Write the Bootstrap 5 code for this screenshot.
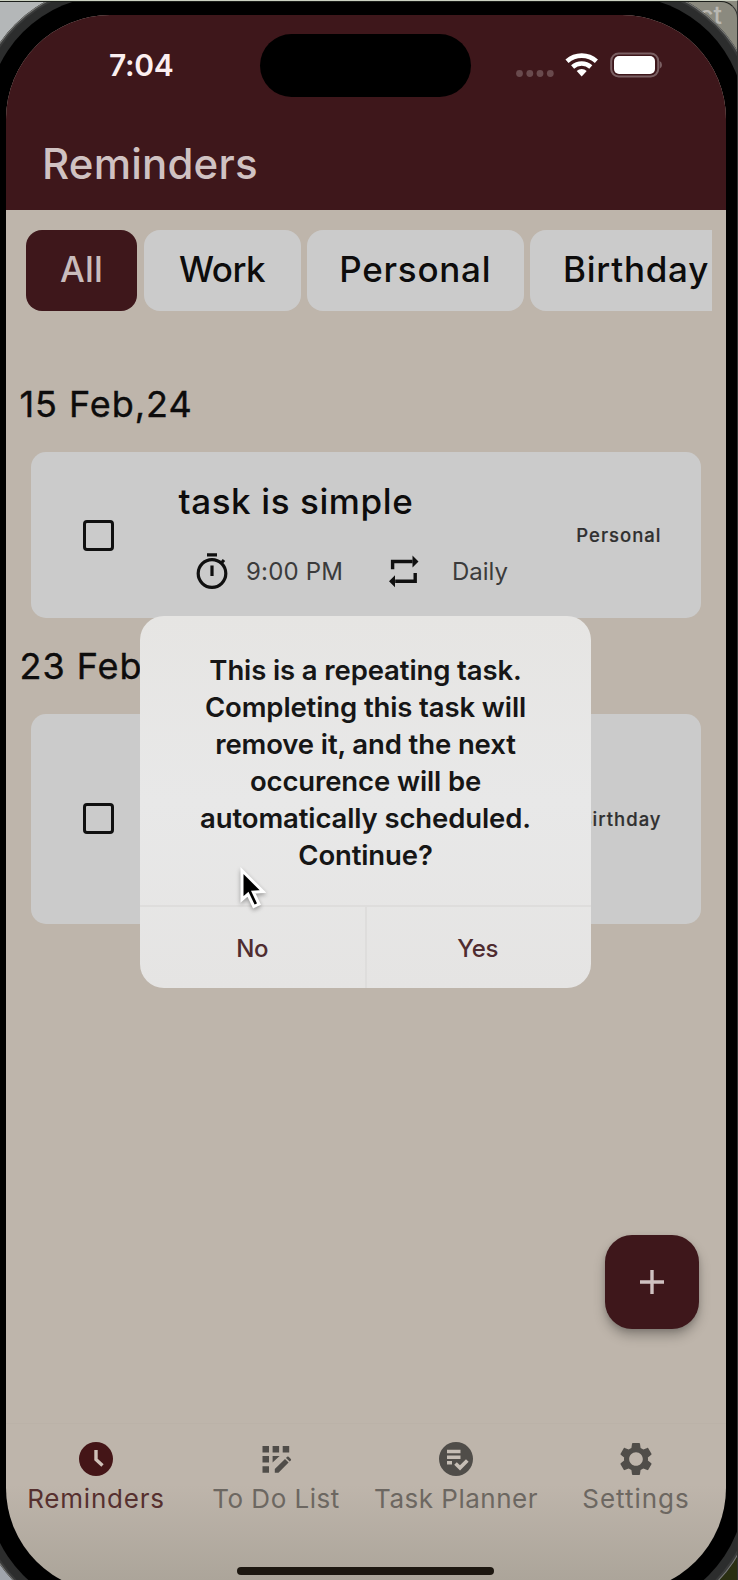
<!DOCTYPE html>
<html lang="en">
<head>
<meta charset="utf-8">
<meta name="viewport" content="width=device-width, initial-scale=1">
<title>Reminders</title>
<link href="https://cdn.jsdelivr.net/npm/bootstrap@5.3.0/dist/css/bootstrap.min.css" rel="stylesheet">
<style>
  :root { --maroon: #3e171b; --sand: #beb5ab; --tile: #cbcbcb; }
  html, body { height: 1580px; overflow: hidden; }
  body {
    font-family: Inter, "Liberation Sans", sans-serif; color: #0d0c0c;
    background:
      linear-gradient(90deg, #b4b7b8 0 50%, transparent 50%) top / 100% 200px no-repeat,
      linear-gradient(90deg, transparent 0 50%, #8b8a7f 50%) top / 100% 200px no-repeat,
      linear-gradient(90deg, #a0a5ac 0 50%, #2a2f12 50%);
  }
  svg { display: block; flex: none; }
  .desk-text { left: 699px; top: 0; font-size: 25px; line-height: 30px; font-weight: 500; color: #b9b8b2; }
  .window-edge { inset: 0; border-top: 1px solid #ccd2c2; border-right: 1px solid #3c3c3c; z-index: 30; pointer-events: none; }
  .window-edge::before { content: ""; position: absolute; inset: 0 -1px 0 0; border-top: 1px solid #1c1f1b; border-right: 1px solid #333; border-radius: 0 17px 0 0; }

  /* device: metal rim, black bezel, screen */
  .rim { width: 780px; height: 1637px; margin: -15px 0 0 -24px; padding: 11px; border-radius: 134px; background: #2c2d2d; box-shadow: inset 0 0 0 1px #777875, inset 0 0 0 3px #3a3b3b; }
  .bezel { height: 100%; padding: 19px; border-radius: 123px; background: #000; }
  .screen { height: 1577px; border-radius: 104px; background: linear-gradient(var(--sand) 0 1470px, #aca59a 1565px); }

  .app-top { height: 194.5px; background: var(--maroon); }
  .status { height: 100px; padding: 0 64px 0 103px; }
  .clock { font-size: 30px; font-weight: 600; color: #fbeff0; width: 151px; letter-spacing: -.3px; }
  .island { width: 211px; height: 63px; border-radius: 32px; background: #000; }
  .app-title { font-size: 42px; font-weight: 500; line-height: 50px; letter-spacing: .2px; color: #d0c2c2; margin: 23.500px 0 0 36px; }

  .chips { margin: 20.5px 14px 0 20px; gap: 6.5px; }
  .chip { height: 81px; border-radius: 16px; background: var(--tile); font-size: 35px; font-weight: 500; flex: none; border: 0; letter-spacing: .75px; color: #0d0c0c; padding: 0 0 2px; }
  .chip-on { background: var(--maroon); color: #c9bcbc; }

  .day { font-size: 36px; line-height: 42px; font-weight: 400; letter-spacing: .95px; padding: 0 0 2px 13.500px; margin: 0; -webkit-text-stroke: .4px; }
  .task { margin: 25px 25px 0; border-radius: 15px; background: var(--tile); }
  .task-check { width: 31px; height: 31px; border: 3.2px solid #101010; border-radius: 4px; margin-left: 51.500px; }
  .task-name { font-size: 35px; line-height: 42px; font-weight: 500; letter-spacing: .6px; }
  .task-meta { font-size: 24px; line-height: 34px; color: #3b3b3b; }
  .task-tag { font-size: 18.500px; font-weight: 500; letter-spacing: 1px; color: #303030; margin: 1.500px 39.500px 0 0; -webkit-text-stroke: .2px; }

  .alert-box { left: 134px; top: 601px; width: 451px; height: 372px; border-radius: 24px; background: linear-gradient(#e6e5e3, #e8e8e8 50%, #e5e4e3); z-index: 5; }
  .alert-text { font-size: 27.5px; line-height: 37px; font-weight: 600; letter-spacing: -.12px; padding-top: 36px; height: 289px; margin: 0; color: #161616; }
  .alert-actions { border-top: 2px solid #dedddc; }
  .alert-btn { font-size: 24px; font-weight: 500; color: #4f2c30; background: none; border: 0; letter-spacing: -.2px; padding: 2px 1px 0 0; }
  .alert-btn + .alert-btn { border-left: 2px solid #dedddc; margin-left: -1px; }
  .pointer { left: 98px; top: 250px; filter: drop-shadow(0 2px 2px rgba(0,0,0,.35)); }

  .fab { right: 27px; top: 1219.500px; width: 94px; height: 94.500px; border-radius: 27px; background: var(--maroon); box-shadow: 0 7px 12px rgba(0,0,0,.26), 0 2px 5px rgba(0,0,0,.12); border: 0; padding: 0; }
  .tabs { height: 169px; padding-top: 17px; border-top: 1px solid #bbb2a8; }
  .tab { width: 25%; font-size: 26px; line-height: 34px; color: #6c6761; gap: 4.500px; white-space: nowrap; }
  .tab svg { color: #504d49; }
  .tab-on { color: #56302f; }
  .tab-on svg { color: #441517; }
  .home-bar { left: 231px; top: 1552px; width: 257px; height: 8px; border-radius: 4px; background: #1d1710; }
</style>
</head>
<body>
<span class="desk-text position-absolute">ct</span>
<div class="window-edge position-absolute"></div>
<div class="rim position-relative">
 <div class="bezel">
  <div class="screen position-relative overflow-hidden d-flex flex-column">

   <header class="app-top">
    <div class="status d-flex align-items-center">
     <span class="clock">7:04</span>
     <span class="island"></span>
     <svg class="ms-auto" width="146" height="28" viewBox="0 0 146 28">
      <g fill="#694a4d"><circle cx="3.500" cy="22.500" r="3.400"/><circle cx="13.800" cy="22.500" r="3.400"/><circle cx="24" cy="22.500" r="3.400"/><circle cx="34.300" cy="22.500" r="3.400"/></g>
      <g fill="none" stroke="#fff" stroke-width="4.600"><path d="M51 10.300a22 22 0 0 1 29.400 0"/><path d="M56.600 16a13.800 13.800 0 0 1 18.200 0"/></g>
      <path fill="#fff" d="M65.700 25.500l-5-5.600a7.600 7.600 0 0 1 10 0z"/>
      <rect x="95.200" y="2.400" width="47" height="23" rx="7.500" fill="none" stroke="#7a5f62" stroke-width="2"/>
      <rect x="98" y="5" width="41" height="18" rx="5" fill="#fff"/>
      <path d="M143.600 10q2.400 1 2.400 3.900t-2.400 3.900z" fill="#7a5f62"/>
     </svg>
    </div>
    <h1 class="app-title">Reminders</h1>
   </header>

   <nav class="chips d-flex overflow-hidden">
    <button class="chip chip-on" style="width:111px;letter-spacing:.1px">All</button>
    <button class="chip" style="width:157px;letter-spacing:-.5px">Work</button>
    <button class="chip" style="width:216.500px">Personal</button>
    <button class="chip ps-4 text-start" style="width:210px"><span style="padding-left:9px">Birthday</span></button>
   </nav>

   <h2 class="day" style="margin-top:72px">15 Feb,24</h2>
   <article class="task d-flex align-items-center" style="height:166px">
    <span class="task-check"></span>
    <div class="flex-grow-1" style="margin-left:65px">
     <div class="task-name" style="padding-top:1px">task is simple</div>
     <div class="task-meta d-flex align-items-center" style="margin:29px 0 0 15.500px">
      <svg width="36" height="40" viewBox="0 0 36 40" fill="none" stroke="#101010" stroke-width="3.200"><circle cx="18" cy="22.500" r="13.800"/><path d="M13 3.800h10M18 14.500v10.500M26.500 13l3.500-4"/></svg>
      <span style="margin:2px 0 0 16px;width:96px;letter-spacing:.2px;white-space:nowrap">9:00 PM</span>
      <svg style="margin-left:46px" width="32" height="34" viewBox="0 0 32 34"><g fill="none" stroke="#101010" stroke-width="3.400"><path d="M4.600 15.200V7.500h20"/><path d="M27.200 19v8.300h-20"/></g><path fill="#101010" d="M24.500 1.500l6 6-6 6zM7 21.300L1 27.300l6 6z"/></svg>
      <span style="margin:2px 0 0 32px">Daily</span>
     </div>
    </div>
    <span class="task-tag">Personal</span>
   </article>

   <h2 class="day" style="margin-top:27px">23 Feb</h2>
   <article class="task d-flex align-items-center" style="height:209.500px">
    <span class="task-check"></span>
    <span class="task-tag ms-auto">Birthday</span>
   </article>

   <section class="alert-box position-absolute d-flex flex-column text-center overflow-hidden">
    <p class="alert-text">This is a repeating task.<br>Completing this task will<br>remove it, and the next<br>occurence will be<br>automatically scheduled.<br>Continue?</p>
    <div class="alert-actions d-flex flex-grow-1">
     <button class="alert-btn w-50">No</button>
     <button class="alert-btn w-50">Yes</button>
    </div>
    <svg class="pointer position-absolute" width="32" height="46" viewBox="0 0 32 46"><path d="M4 4.500v29l6-5.200 5.800 12.200 5.200-2.500-5.700-11.800 9.700-.7z" fill="#000" stroke="#fff" stroke-width="3"/></svg>
   </section>

   <button class="fab position-absolute d-flex align-items-center justify-content-center">
    <svg width="24" height="24" viewBox="0 0 24 24" stroke="#cfc1c1" stroke-width="3.400"><path d="M12 0v24M0 12h24"/></svg>
   </button>

   <nav class="tabs d-flex mt-auto">
    <div class="tab tab-on d-flex flex-column align-items-center" style="letter-spacing:.8px">
     <svg width="36" height="36" viewBox="0 0 36 36"><circle cx="18" cy="18" r="17" fill="currentColor"/><path d="M18 9v9.500l6.500 6" fill="none" stroke="#cfc0b8" stroke-width="3.400"/></svg>
     Reminders
    </div>
    <div class="tab d-flex flex-column align-items-center" style="letter-spacing:.5px">
     <svg width="36" height="36" viewBox="0 0 36 36" fill="currentColor"><path d="M4.500 5h6.500v6.500H4.500zM14.600 5h6.500v6.500h-6.500zM24.700 5h6.500v6.500h-6.500zM4.500 15.100h6.500v6.500H4.500zM4.500 25.200h6.500v6.500H4.500zM14.600 15.100h7l-7 6.500zM16.800 31.700v-3.800L27 18l3.600 3.600-10.100 10.100zM28 16.900l1.100-1.100q.8-.7 1.600 0l2.100 2.100q.7.800 0 1.600L31.700 20.600z"/></svg>
     To Do List
    </div>
    <div class="tab d-flex flex-column align-items-center" style="letter-spacing:.5px">
     <svg width="36" height="36" viewBox="0 0 36 36"><circle cx="18" cy="18" r="17" fill="currentColor"/><path d="M9 10.600h13.500M9 16.200h13.500M9 21.800h5" stroke="#c6beb5" stroke-width="3.500"/><path d="M17.500 22.500l4.500 4.300 7.300-7.300" fill="none" stroke="#c6beb5" stroke-width="3.700"/></svg>
     Task Planner
    </div>
    <div class="tab d-flex flex-column align-items-center" style="letter-spacing:1px">
     <svg width="40" height="36" viewBox="1.200 1.200 21.600 21.600" fill="currentColor"><path d="M19.140 12.940c.04-.3.060-.610.060-.940 0-.320-.020-.640-.070-.940l2.030-1.580c.18-.140.230-.410.120-.610l-1.920-3.320c-.120-.220-.370-.290-.590-.220l-2.390.960c-.5-.380-1.030-.7-1.620-.940l-.360-2.540c-.040-.240-.240-.410-.480-.410h-3.840c-.240 0-.430.170-.470.410l-.360 2.540c-.590.240-1.130.570-1.620.940l-2.390-.960c-.22-.080-.470 0-.590.220L2.740 8.870c-.12.210-.080.470.120.610l2.030 1.580c-.050.300-.090.630-.090.940s.020.640.070.940l-2.030 1.580c-.18.140-.23.410-.12.610l1.920 3.320c.12.220.37.290.59.220l2.390-.96c.5.380 1.030.7 1.620.94l.36 2.540c.05.240.24.410.48.410h3.840c.24 0 .44-.17.470-.41l.36-2.540c.59-.24 1.130-.56 1.620-.94l2.390.96c.22.080.47 0 .59-.22l1.920-3.320c.12-.22.070-.47-.12-.61l-2.010-1.580zM12 16.100c-2.260 0-4.100-1.840-4.100-4.100s1.840-4.100 4.100-4.100 4.100 1.840 4.100 4.100-1.840 4.100-4.100 4.100z"/></svg>
     Settings
    </div>
   </nav>
   <div class="home-bar position-absolute"></div>
  </div>
 </div>
</div>
<script src="https://cdn.jsdelivr.net/npm/bootstrap@5.3.0/dist/js/bootstrap.bundle.min.js"></script>
</body>
</html>
